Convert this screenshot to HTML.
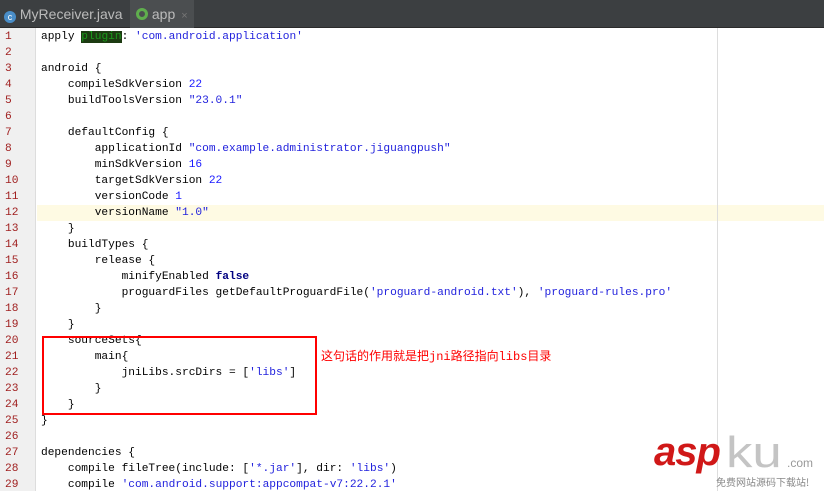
<!DOCTYPE html>
<html><head><meta charset="utf-8"><style>
*{margin:0;padding:0;box-sizing:border-box}
body{width:824px;height:491px;overflow:hidden;background:#fff;position:relative;font-family:"Liberation Mono",monospace}
#tabs{position:absolute;left:0;top:0;width:824px;height:28px;background:#3c3f41;border-bottom:1px solid #2b2b2b}
.tab{position:absolute;top:0;height:28px;color:#bbb;font:14px "Liberation Sans",sans-serif;line-height:28px;white-space:nowrap;overflow:hidden}
.tab .x{color:#777;font-size:11px;margin-left:6px}
#gut{position:absolute;left:0;top:28px;width:36px;height:463px;background:#f0f0f0;border-right:1px solid #ddd}
.ln{position:absolute;left:5px;width:20px;color:#a02020;font-size:11.2px;height:16px;line-height:16px}
.cl{position:absolute;left:41px;font-size:11.2px;height:16px;line-height:16px;white-space:pre;color:#000}
.s{color:#2222dd}.k{color:#000080;font-weight:bold}.n{color:#1a1aff}
#hl{position:absolute;left:37px;top:205px;width:787px;height:16px;background:#fefae3}
#mar{position:absolute;left:717px;top:28px;width:1px;height:463px;background:#ddd}
#box{position:absolute;left:42px;top:336px;width:275px;height:79px;border:2px solid #f00}
#note{position:absolute;left:321px;top:347px;color:#f00;font:12px "Liberation Mono","Noto Sans CJK SC",monospace}
</style></head><body>
<div id="tabs">
<div class="tab" style="left:0;width:128px;padding-left:4px"><span style="display:inline-block;width:12px;height:12px;border-radius:50%;background:#4a8ec8;vertical-align:-1px;color:#fff;font-size:9px;text-align:center;line-height:12px">c</span> MyReceiver.java<span class="x">×</span></div>
<div class="tab" style="left:130px;width:64px;background:#4b4e50;padding-left:6px"><span style="display:inline-block;width:12px;height:12px;border-radius:50%;border:3px solid #5fae4d;vertical-align:-1px"></span> app<span class="x">×</span></div>
</div>
<div id="gut"></div>
<div id="hl"></div>
<div id="mar"></div>
<div id="lines"></div>
<script>
var L=[
'apply <span style="background:#1d3b12;color:#1a9a1a">plugin</span>: <span class="s">\'com.android.application\'</span>',
'',
'android {',
'    compileSdkVersion <span class="n">22</span>',
'    buildToolsVersion <span class="s">"23.0.1"</span>',
'',
'    defaultConfig {',
'        applicationId <span class="s">"com.example.administrator.jiguangpush"</span>',
'        minSdkVersion <span class="n">16</span>',
'        targetSdkVersion <span class="n">22</span>',
'        versionCode <span class="n">1</span>',
'        versionName <span class="s">"1.0"</span>',
'    }',
'    buildTypes {',
'        release {',
'            minifyEnabled <span class="k">false</span>',
'            proguardFiles getDefaultProguardFile(<span class="s">\'proguard-android.txt\'</span>), <span class="s">\'proguard-rules.pro\'</span>',
'        }',
'    }',
'    sourceSets{',
'        main{',
'            jniLibs.srcDirs = [<span class="s">\'libs\'</span>]',
'        }',
'    }',
'}',
'',
'dependencies {',
'    compile fileTree(include: [<span class="s">\'*.jar\'</span>], dir: <span class="s">\'libs\'</span>)',
'    compile <span class="s">\'com.android.support:appcompat-v7:22.2.1\'</span>'];
var h='';for(var i=0;i<L.length;i++){var t=29+16*i;h+='<div class="ln" style="top:'+t+'px">'+(i+1)+'</div><div class="cl" style="top:'+t+'px">'+L[i]+'</div>';}
document.getElementById('lines').innerHTML=h;
</script>
<div id="box"></div>
<div id="note">这句话的作用就是把jni路径指向libs目录</div>
<div style="position:absolute;left:654px;top:430px;font:italic bold 40px 'Liberation Sans',sans-serif;color:#d01818;letter-spacing:-1px">asp</div>
<div style="position:absolute;left:726px;top:428px;font:44px 'Liberation Sans',sans-serif;color:#c4c4c4;transform:scaleX(1.2);transform-origin:left">ku</div>
<div style="position:absolute;left:787px;top:456px;font:12px 'Liberation Sans',sans-serif;color:#999">.com</div>
<div style="position:absolute;left:716px;top:474px;font:10px 'Noto Sans CJK SC',sans-serif;color:#888">免费网站源码下载站!</div>
</body></html>
